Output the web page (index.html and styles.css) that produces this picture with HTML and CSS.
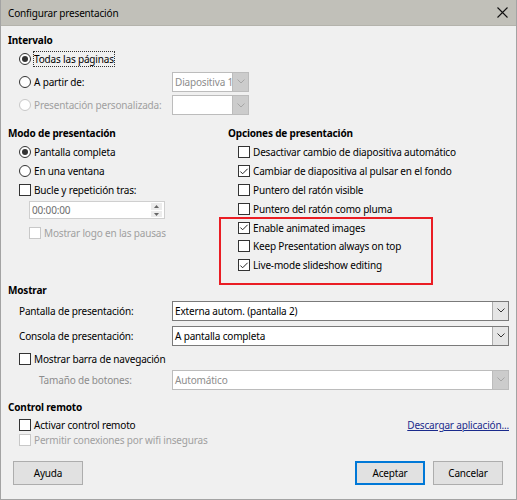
FILE: index.html
```html
<!DOCTYPE html>
<html lang="es">
<head>
    <meta charset="UTF-8">
    <title>Configurar presentación</title>
    <link rel="stylesheet" href="styles.css">
</head>
<body>
    <div class="window">
        <div class="titlebar">
            <span>Configurar presentación</span>
            <svg class="close" width="11" height="11" viewBox="0 0 11 11"><path d="M0.5 0.5L10.5 10.5M10.5 0.5L0.5 10.5" stroke="#111" stroke-width="1.1"/></svg>
        </div>
        <div class="content">
            <!-- Intervalo -->
            <h2 class="heading first">Intervalo</h2>
            <div class="interval-grid">
                <label class="opt"><span class="radio on"></span><span class="focus">Todas las páginas</span></label>
                <span></span>
                <label class="opt"><span class="radio"></span>A partir de:</label>
                <div class="combo short disabled"><span class="combo-text">Diapositiva 1</span><span class="combo-btn"><svg width="8" height="5" viewBox="0 0 8 5"><path d="M0.5 0.5L4 4L7.5 0.5" fill="none" stroke="currentColor"/></svg></span></div>
                <label class="opt disabled"><span class="radio"></span>Presentación personalizada:</label>
                <div class="combo short disabled"><span class="combo-text"></span><span class="combo-btn"><svg width="8" height="5" viewBox="0 0 8 5"><path d="M0.5 0.5L4 4L7.5 0.5" fill="none" stroke="currentColor"/></svg></span></div>
            </div>

            <div class="columns">
                <section class="mode">
                    <h2 class="heading">Modo de presentación</h2>
                    <div class="list">
                        <label class="opt row"><span class="radio on"></span>Pantalla completa</label>
                        <label class="opt row"><span class="radio"></span>En una ventana</label>
                        <label class="opt row"><span class="check"></span>Bucle y repetición tras:</label>
                    </div>
                    <div class="spin">
                        <span class="spin-text">00:00:00</span>
                        <span class="spin-btns">
                            <span class="spin-btn"><svg width="5" height="3" viewBox="0 0 5 3"><path d="M0 3L2.5 0L5 3Z" fill="#666"/></svg></span>
                            <span class="spin-btn"><svg width="5" height="3" viewBox="0 0 5 3"><path d="M0 0L2.5 3L5 0Z" fill="#666"/></svg></span>
                        </span>
                    </div>
                    <label class="opt row logo disabled"><span class="check"></span>Mostrar logo en las pausas</label>
                </section>
                <section class="options">
                    <h2 class="heading">Opciones de presentación</h2>
                    <div class="list">
                        <label class="opt row"><span class="check"></span>Desactivar cambio de diapositiva automático</label>
                        <label class="opt row"><span class="check on"><svg width="11" height="11" viewBox="0 0 11 11"><path d="M1.5 5.5L4 8L9.5 2.5" fill="none" stroke="#222" stroke-width="1.1"/></svg></span>Cambiar de diapositiva al pulsar en el fondo</label>
                        <label class="opt row"><span class="check"></span>Puntero del ratón visible</label>
                        <label class="opt row"><span class="check"></span>Puntero del ratón como pluma</label>
                        <div class="marked">
                            <label class="opt row"><span class="check on"><svg width="11" height="11" viewBox="0 0 11 11"><path d="M1.5 5.5L4 8L9.5 2.5" fill="none" stroke="#222" stroke-width="1.1"/></svg></span>Enable animated images</label>
                            <label class="opt row"><span class="check"></span>Keep Presentation always on top</label>
                            <label class="opt row"><span class="check on"><svg width="11" height="11" viewBox="0 0 11 11"><path d="M1.5 5.5L4 8L9.5 2.5" fill="none" stroke="#222" stroke-width="1.1"/></svg></span>Live-mode slideshow editing</label>
                        </div>
                    </div>
                </section>
            </div>

            <!-- Mostrar -->
            <h2 class="heading show">Mostrar</h2>
            <div class="field first-field">
                <span class="field-label">Pantalla de presentación:</span>
                <div class="combo"><span class="combo-text">Externa autom. (pantalla 2)</span><span class="combo-btn"><svg width="8" height="5" viewBox="0 0 8 5"><path d="M0.5 0.5L4 4L7.5 0.5" fill="none" stroke="currentColor"/></svg></span></div>
            </div>
            <div class="field second-field">
                <span class="field-label">Consola de presentación:</span>
                <div class="combo"><span class="combo-text">A pantalla completa</span><span class="combo-btn"><svg width="8" height="5" viewBox="0 0 8 5"><path d="M0.5 0.5L4 4L7.5 0.5" fill="none" stroke="currentColor"/></svg></span></div>
            </div>
            <label class="opt row navbar"><span class="check"></span>Mostrar barra de navegación</label>
            <div class="field size-field">
                <span class="field-label sub disabled">Tamaño de botones:</span>
                <div class="combo disabled"><span class="combo-text">Automático</span><span class="combo-btn"><svg width="8" height="5" viewBox="0 0 8 5"><path d="M0.5 0.5L4 4L7.5 0.5" fill="none" stroke="currentColor"/></svg></span></div>
            </div>

            <!-- Control remoto -->
            <h2 class="heading remote">Control remoto</h2>
            <div class="remote-row">
                <label class="opt tight"><span class="check"></span>Activar control remoto</label>
                <a class="link" href="#">Descargar aplicación...</a>
            </div>
            <label class="opt tight disabled"><span class="check"></span>Permitir conexiones por wifi inseguras</label>

            <div class="buttons">
                <button class="btn">Ayuda</button>
                <div class="btn-group">
                    <button class="btn default">Aceptar</button>
                    <button class="btn">Cancelar</button>
                </div>
            </div>
        </div>
    </div>
</body>
</html>
```

FILE: styles.css
```css
* {
    box-sizing: border-box;
}
body {
    margin: 0;
    font-family: "Noto Sans", "Open Sans", sans-serif;
    font-size: 10px;
    letter-spacing: -0.17px;
    color: #000;
    background-color: #f0f0f0;
}
.window {
    width: 517px;
    height: 500px;
    border: 1px solid #a3a3a3;
    border-top: none;
    background-color: #f0f0f0;
}
.titlebar {
    height: 26px;
    padding: 0 7px 0 7px;
    display: flex;
    align-items: center;
    justify-content: space-between;
    background-color: #c1c0b9;
    border-bottom: 1px solid #b4b3ac;
}
.close {
    margin-right: 1px;
}
.content {
    padding: 0 7px;
}

/* Section headings */
.heading {
    margin: 0;
    font-size: 10px;
    font-weight: bold;
    line-height: 16px;
    height: 16px;
}
.heading.first {
    margin-top: 6px;
}
.heading.show {
    margin-top: 7px;
}
.heading.remote {
    margin-top: 9px;
}

/* Radios and check boxes */
.opt {
    display: flex;
    align-items: center;
    white-space: nowrap;
}
.opt.disabled {
    color: #a0a0a0;
}
.radio,
.check {
    flex: none;
    width: 12px;
    height: 12px;
    margin-right: 3px;
    background-color: #fff;
    border: 1px solid #333;
    display: flex;
    align-items: center;
    justify-content: center;
}
.radio {
    border-radius: 50%;
}
.radio.on::after {
    content: "";
    width: 6px;
    height: 6px;
    border-radius: 50%;
    background-color: #333;
}
.opt.disabled .radio,
.opt.disabled .check {
    border-color: #c8c8c8;
}
.focus {
    outline: 1px dotted #333;
    outline-offset: 0;
    line-height: 14px;
}
.row {
    height: 18.8px;
}
.tight {
    height: 15px;
}

/* Intervalo */
.interval-grid {
    margin-top: 2px;
    padding-left: 11px;
    display: grid;
    grid-template-columns: 153px 77px;
    grid-template-rows: 18px 20px 20px;
    row-gap: 3.5px;
    align-items: center;
}

/* Combo boxes */
.combo {
    height: 20px;
    display: flex;
    background-color: #fff;
    border: 1px solid #7a7a7a;
}
.combo-text {
    flex: 1;
    padding-left: 2px;
    line-height: 18px;
    white-space: nowrap;
    overflow: hidden;
}
.combo-btn {
    width: 16px;
    flex: none;
    display: flex;
    align-items: center;
    justify-content: center;
    background-color: #e5e5e5;
    border-left: 1px solid #adadad;
    color: #333;
}
.combo.disabled {
    border-color: #bcbcbc;
    color: #8d8d8d;
}
.combo.disabled .combo-btn {
    background-color: #cccccc;
    border-left-color: #bcbcbc;
    color: #a6a6a6;
}

/* Two columns */
.columns {
    margin-top: 10px;
    display: grid;
    grid-template-columns: 220px 1fr;
}
.list {
    margin-top: 2px;
    padding-left: 11px;
}
.options .list {
    padding-left: 10px;
}
.marked {
    position: relative;
}
.marked::after {
    content: "";
    position: absolute;
    top: -1px;
    left: -19px;
    width: 210px;
    bottom: -10px;
    border: 2px solid #ea1d24;
}

/* Time spin field */
.spin {
    margin: 2px 0 0 21px;
    width: 136px;
    height: 18px;
    display: flex;
    background-color: #fff;
    border: 1px solid #cfcfcf;
}
.spin-text {
    flex: 1;
    padding-left: 2px;
    line-height: 16px;
    color: #6d6d6d;
}
.spin-btns {
    width: 11px;
    margin: 1px 2px 1px 0;
    display: flex;
    flex-direction: column;
    gap: 1px;
}
.spin-btn {
    flex: 1;
    display: flex;
    align-items: center;
    justify-content: center;
    background-color: #ececec;
}
.logo {
    margin: 4px 0 0 21px;
}

/* Mostrar */
.field {
    display: flex;
    align-items: center;
    padding-left: 11px;
}
.field-label {
    width: 153px;
    flex: none;
}
.field-label.sub {
    padding-left: 20px;
}
.field-label.disabled {
    color: #8d8d8d;
}
.field .combo {
    flex: 1;
}
.first-field {
    margin-top: 3px;
}
.second-field {
    margin-top: 5px;
}
.navbar {
    margin: 4px 0 0 11px;
    height: 18px;
}
.size-field {
    margin-top: 2px;
}

/* Control remoto */
.remote-row {
    margin-top: 3px;
    display: flex;
    justify-content: space-between;
    align-items: center;
}
.remote-row .opt,
.content > .tight {
    padding-left: 11px;
}
.link {
    color: #1a2a8c;
    text-decoration: underline;
}

/* Bottom buttons */
.buttons {
    margin-top: 13px;
    padding: 0 6px 0 5px;
    display: flex;
    justify-content: space-between;
}
.btn-group {
    display: flex;
    gap: 8px;
}
.btn {
    width: 70px;
    height: 24px;
    font-family: inherit;
    font-size: 10px;
    letter-spacing: inherit;
    color: #000;
    background-color: #e1e1e1;
    border: 1px solid #adadad;
    padding: 0;
}
.btn.default {
    border: 2px solid #0078d7;
}
```
